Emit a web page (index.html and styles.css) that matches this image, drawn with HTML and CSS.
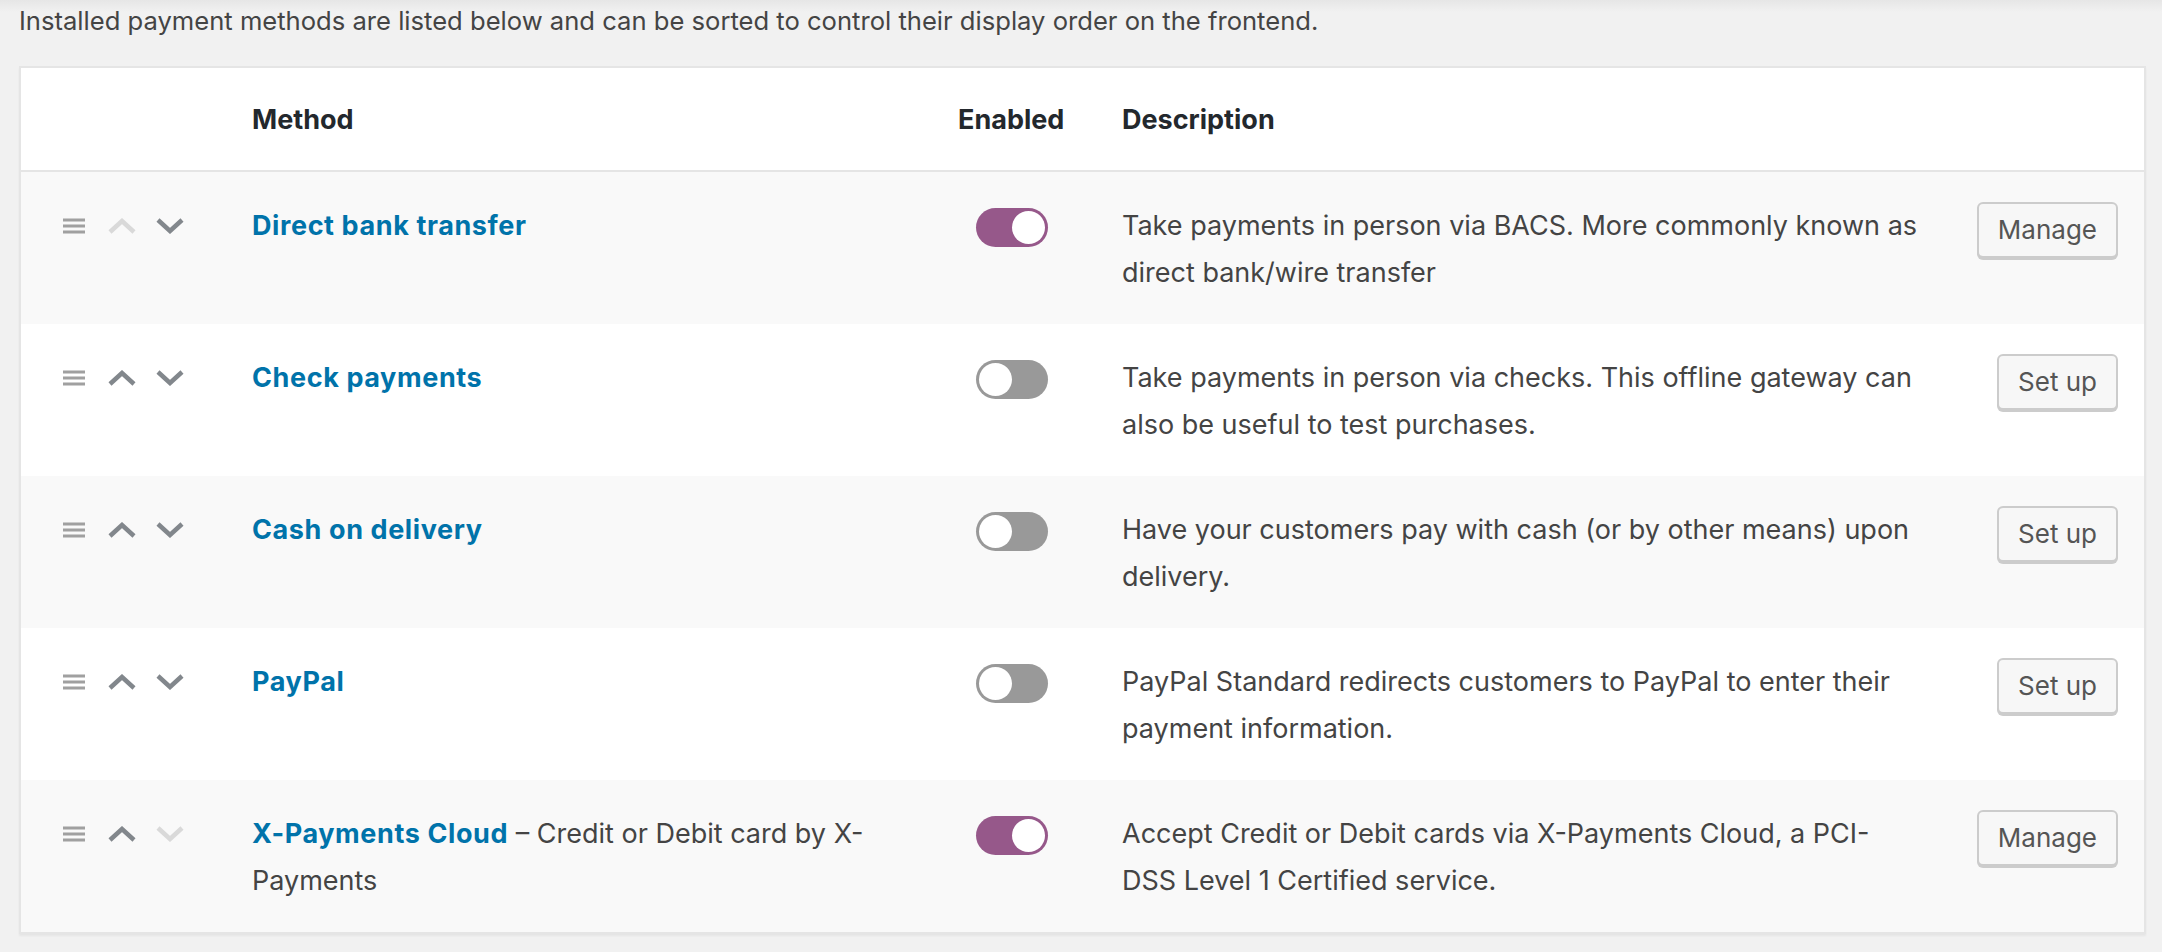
FILE: index.html
```html
<!DOCTYPE html>
<html lang="en">
<head>
<meta charset="utf-8">
<title>Payment methods</title>
<link rel="stylesheet" href="styles.css">
</head>
<body>
<div class="wrap">
  <p class="intro">Installed payment methods are listed below and can be sorted to control their display order on the frontend.</p>
  <div class="gateways">
    <div class="gw-row gw-head">
      <div></div>
      <div>Method</div>
      <div>Enabled</div>
      <div>Description</div>
      <div></div>
    </div>

    <div class="gw-row alt">
      <div class="sort">
        <svg class="ic-drag" width="22" height="16" viewBox="0 0 22 16"><rect x="0" y="0.5" width="22" height="3"/><rect x="0" y="6.5" width="22" height="3"/><rect x="0" y="12.5" width="22" height="3"/></svg>
        <svg class="ic-chev off" width="28" height="16" viewBox="0 0 28 16"><path d="M2 14 L14 3 L26 14"/></svg>
        <svg class="ic-chev" width="28" height="16" viewBox="0 0 28 16"><path d="M2 2 L14 13 L26 2"/></svg>
      </div>
      <div class="name"><a href="#">Direct bank transfer</a></div>
      <div class="enabled"><span class="toggle on"></span></div>
      <div class="desc">Take payments in person via BACS. More commonly known as direct bank/wire transfer</div>
      <div class="action"><button class="btn">Manage</button></div>
    </div>

    <div class="gw-row">
      <div class="sort">
        <svg class="ic-drag" width="22" height="16" viewBox="0 0 22 16"><rect x="0" y="0.5" width="22" height="3"/><rect x="0" y="6.5" width="22" height="3"/><rect x="0" y="12.5" width="22" height="3"/></svg>
        <svg class="ic-chev" width="28" height="16" viewBox="0 0 28 16"><path d="M2 14 L14 3 L26 14"/></svg>
        <svg class="ic-chev" width="28" height="16" viewBox="0 0 28 16"><path d="M2 2 L14 13 L26 2"/></svg>
      </div>
      <div class="name"><a href="#">Check payments</a></div>
      <div class="enabled"><span class="toggle"></span></div>
      <div class="desc">Take payments in person via checks. This offline gateway can also be useful to test purchases.</div>
      <div class="action"><button class="btn">Set up</button></div>
    </div>

    <div class="gw-row alt">
      <div class="sort">
        <svg class="ic-drag" width="22" height="16" viewBox="0 0 22 16"><rect x="0" y="0.5" width="22" height="3"/><rect x="0" y="6.5" width="22" height="3"/><rect x="0" y="12.5" width="22" height="3"/></svg>
        <svg class="ic-chev" width="28" height="16" viewBox="0 0 28 16"><path d="M2 14 L14 3 L26 14"/></svg>
        <svg class="ic-chev" width="28" height="16" viewBox="0 0 28 16"><path d="M2 2 L14 13 L26 2"/></svg>
      </div>
      <div class="name"><a href="#">Cash on delivery</a></div>
      <div class="enabled"><span class="toggle"></span></div>
      <div class="desc">Have your customers pay with cash (or by other means) upon delivery.</div>
      <div class="action"><button class="btn">Set up</button></div>
    </div>

    <div class="gw-row">
      <div class="sort">
        <svg class="ic-drag" width="22" height="16" viewBox="0 0 22 16"><rect x="0" y="0.5" width="22" height="3"/><rect x="0" y="6.5" width="22" height="3"/><rect x="0" y="12.5" width="22" height="3"/></svg>
        <svg class="ic-chev" width="28" height="16" viewBox="0 0 28 16"><path d="M2 14 L14 3 L26 14"/></svg>
        <svg class="ic-chev" width="28" height="16" viewBox="0 0 28 16"><path d="M2 2 L14 13 L26 2"/></svg>
      </div>
      <div class="name"><a href="#">PayPal</a></div>
      <div class="enabled"><span class="toggle"></span></div>
      <div class="desc">PayPal Standard redirects customers to PayPal to enter their payment information.</div>
      <div class="action"><button class="btn">Set up</button></div>
    </div>

    <div class="gw-row alt">
      <div class="sort">
        <svg class="ic-drag" width="22" height="16" viewBox="0 0 22 16"><rect x="0" y="0.5" width="22" height="3"/><rect x="0" y="6.5" width="22" height="3"/><rect x="0" y="12.5" width="22" height="3"/></svg>
        <svg class="ic-chev" width="28" height="16" viewBox="0 0 28 16"><path d="M2 14 L14 3 L26 14"/></svg>
        <svg class="ic-chev off" width="28" height="16" viewBox="0 0 28 16"><path d="M2 2 L14 13 L26 2"/></svg>
      </div>
      <div class="name"><a href="#">X-Payments Cloud</a> – Credit or Debit card by X-Payments</div>
      <div class="enabled"><span class="toggle on"></span></div>
      <div class="desc">Accept Credit or Debit cards via X-Payments Cloud, a PCI-DSS Level 1 Certified service.</div>
      <div class="action"><button class="btn">Manage</button></div>
    </div>
  </div>
</div>
</body>
</html>
```
FILE: styles.css
```css
html, body {
  margin: 0;
  padding: 0;
}

body {
  background: linear-gradient(to bottom, #e6e6e6 0, #f1f1f1 12px, #f1f1f1 100%);
  font-family: Inter, "Open Sans", "Liberation Sans", sans-serif;
  color: #444;
  min-height: 952px;
}

.wrap {
  padding: 0 16px 0 19px;
}

.intro {
  margin: 8px 0 32px;
  font-size: 25.6px;
  line-height: 26px;
  color: #444;
}

.gateways {
  background: #fff;
  border: 2px solid #e5e5e5;
  box-shadow: 0 2px 2px rgba(0, 0, 0, 0.05);
}

.gw-row {
  display: grid;
  grid-template-columns: 189px 706px 164px 1fr 140px;
  padding: 30px 26px 28px 42px;
  font-size: 27px;
  line-height: 47px;
  color: #444;
}

.gw-head {
  padding: 28px 26px 27px 42px;
  border-bottom: 2px solid #e5e5e5;
  font-weight: 700;
  color: #23282d;
}

.alt {
  background: #f9f9f9;
}

.sort {
  display: flex;
  align-items: flex-start;
  padding-top: 16px;
}

.ic-drag {
  fill: #a0a0a0;
  margin-right: 23px;
}

.ic-chev {
  fill: none;
  stroke: #82878c;
  stroke-width: 4.5;
  margin-right: 20px;
}

.ic-chev.off {
  stroke: #d9d9d9;
}

.name {
  padding-right: 26px;
}

.name a {
  color: #0073aa;
  font-weight: 700;
  letter-spacing: 0.6px;
  text-decoration: none;
}

.enabled {
  padding-top: 6px;
}

.toggle {
  display: block;
  position: relative;
  width: 72px;
  height: 39px;
  margin-left: 18px;
  border-radius: 20px;
  background: #999;
}

.toggle::after {
  content: "";
  position: absolute;
  top: 3px;
  left: 3px;
  width: 33px;
  height: 33px;
  border-radius: 50%;
  background: #fff;
}

.toggle.on {
  background: #96588a;
}

.toggle.on::after {
  left: auto;
  right: 3px;
}

.desc {
  padding-right: 57.5px;
}

.action {
  justify-self: end;
}

.btn {
  box-sizing: border-box;
  height: 56px;
  padding: 0 19px;
  border: 2px solid #cccccc;
  border-radius: 6px;
  background: #f7f7f7;
  box-shadow: 0 2px 0 #cccccc;
  font-family: Inter, "Open Sans", "Liberation Sans", sans-serif;
  font-size: 26px;
  line-height: 52px;
  color: #555;
}
```
